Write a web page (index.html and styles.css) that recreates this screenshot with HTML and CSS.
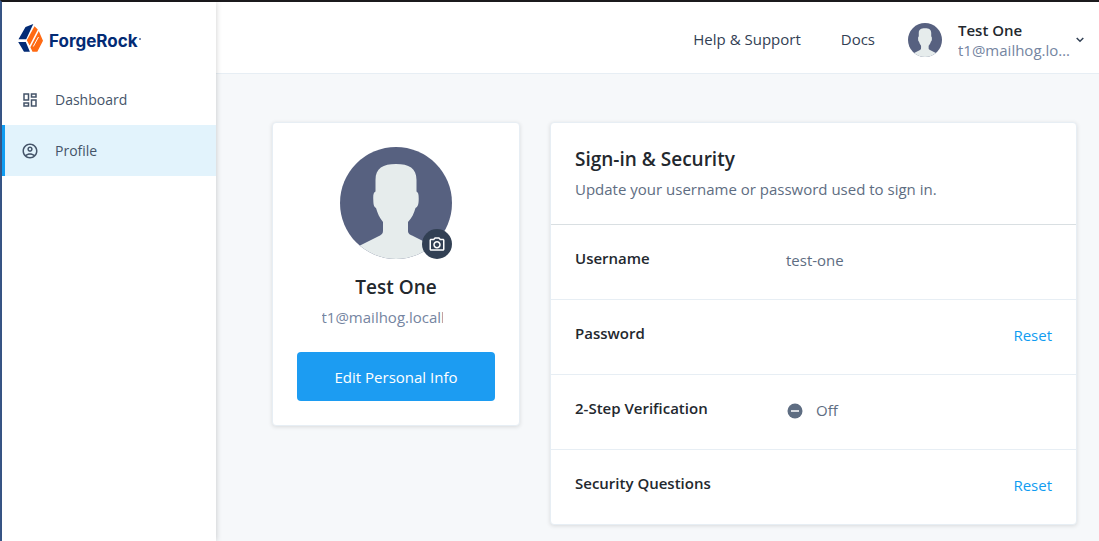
FILE: index.html
```html
<!DOCTYPE html>
<html lang="en">
<head>
<meta charset="utf-8">
<meta name="viewport" content="width=device-width, initial-scale=1">
<title>Profile</title>
<link rel="stylesheet" href="styles.css">
</head>
<body>
<svg class="sprite" aria-hidden="true">
  <symbol id="avatar" viewBox="0 0 112 112">
    <clipPath id="disc"><circle cx="56" cy="56" r="56"/></clipPath>
    <g clip-path="url(#disc)">
      <rect width="112" height="112" fill="#576180"/>
      <path fill="#e6ecec" d="M56 17C43 17 35.500 21 35.500 33V44.500C33.500 45.500 33 48 33.300 53C33.400 58 34 60 36 61C37.500 66 39.500 71 43 75V84C43 87 41 88 38 89.500L20 98.500V112H92V98.500L74 89.500C70 87.500 68 87 68 84V75C72 71 74 66 75.500 61C77.600 60 78.500 58 78.700 53C78.800 48 78.500 45.500 76.500 44.500V33C76.500 21 69 17 56 17Z"/>
    </g>
  </symbol>
</svg>
<div class="app">
  <aside class="sidebar">
    <a class="brand" href="#">
      <svg class="brand-mark" viewBox="0 0 25 28" aria-hidden="true">
        <path fill="#032b75" d="M0.500 15.300 7.500 3 15.300 0 8.200 15.300ZM0.200 18H7.800L11.900 27.800H6Z"/>
        <path fill="#ff6a13" d="M16.500 2.300 19.800 5.600 11.600 21.500 8.800 16.300ZM20.800 7 25 16.700 19.300 27.800H14.500L12.400 23.300Z"/>
        <path stroke="#fff" stroke-width="1" d="M20.500 13 15.300 22.500"/>
      </svg>
      <span>ForgeRock</span><span class="brand-dot"></span>
    </a>
    <nav class="menu">
      <a class="menu-item" href="#">
        <svg viewBox="0 0 24 24" aria-hidden="true"><path d="M19 5v2h-4V5h4M9 5v6H5V5h4m10 8v6h-4v-6h4M9 17v2H5v-2h4M21 3h-8v6h8V3zM11 3H3v10h8V3zm10 8h-8v10h8V11zm-10 4H3v6h8v-6z"/></svg>
        Dashboard
      </a>
      <a class="menu-item active" href="#" aria-current="page">
        <svg viewBox="0 0 24 24" aria-hidden="true"><path d="M12 2C6.480 2 2 6.480 2 12s4.480 10 10 10 10-4.480 10-10S17.520 2 12 2zM7.350 18.500C8.660 17.560 10.260 17 12 17s3.340.560 4.650 1.500C15.340 19.440 13.740 20 12 20s-3.340-.560-4.650-1.500zm10.790-1.380C16.450 15.800 14.320 15 12 15s-4.450.800-6.140 2.120C4.700 15.730 4 13.950 4 12c0-4.420 3.580-8 8-8s8 3.580 8 8c0 1.950-.700 3.730-1.860 5.120zM12 6c-1.930 0-3.500 1.570-3.500 3.500S10.070 13 12 13s3.500-1.570 3.500-3.500S13.930 6 12 6zm0 5c-.830 0-1.500-.670-1.500-1.500S11.170 8 12 8s1.500.670 1.500 1.500S12.830 11 12 11z"/></svg>
        Profile
      </a>
    </nav>
  </aside>
  <div class="page">
    <header class="topbar">
      <a class="top-link" href="#">Help &amp; Support</a>
      <a class="top-link" href="#">Docs</a>
      <button class="account" type="button">
        <svg class="account-avatar" aria-hidden="true"><use href="#avatar"/></svg>
        <span class="account-text">
          <span class="account-name">Test One</span>
          <span class="account-mail">t1@mailhog.localhost</span>
        </span>
        <svg class="chevron" viewBox="0 0 8 6" aria-hidden="true"><path d="M0.700 1 4 4.300 7.300 1"/></svg>
      </button>
    </header>
    <main class="content">
      <section class="card person">
        <div class="portrait">
          <svg class="portrait-image" aria-hidden="true"><use href="#avatar"/></svg>
          <button class="camera" type="button" aria-label="Change photo">
            <svg viewBox="0 0 24 24" aria-hidden="true"><path d="M20 5h-3.170L15 3H9L7.170 5H4c-1.100 0-2 .900-2 2v12c0 1.100.900 2 2 2h16c1.100 0 2-.900 2-2V7c0-1.100-.900-2-2-2zm0 14H4V7h4.050l1.830-2h4.240l1.830 2H20v12zM12 8c-2.760 0-5 2.240-5 5s2.240 5 5 5 5-2.240 5-5-2.240-5-5-5zm0 8c-1.650 0-3-1.350-3-3s1.350-3 3-3 3 1.350 3 3-1.350 3-3 3z"/></svg>
          </button>
        </div>
        <h2 class="heading">Test One</h2>
        <p class="person-mail">t1@mailhog.localhost</p>
        <button class="primary" type="button">Edit Personal Info</button>
      </section>
      <section class="card security">
        <div class="security-head">
          <h2 class="heading">Sign-in &amp; Security</h2>
          <p class="note">Update your username or password used to sign in.</p>
        </div>
        <div class="row">
          <h3 class="label">Username</h3>
          <span class="value">test-one</span>
        </div>
        <div class="row">
          <h3 class="label">Password</h3>
          <a class="action" href="#">Reset</a>
        </div>
        <div class="row">
          <h3 class="label">2-Step Verification</h3>
          <span class="value">
            <svg class="off-icon" viewBox="0 0 18 18" aria-hidden="true"><circle cx="9" cy="10" r="7.500" fill="#5e6d82"/><path d="M5 10h8" stroke="#fff" stroke-width="1.500"/></svg>
            Off
          </span>
        </div>
        <div class="row">
          <h3 class="label">Security Questions</h3>
          <a class="action" href="#">Reset</a>
        </div>
      </section>
    </main>
  </div>
</div>
</body>
</html>
```

FILE: styles.css
```css
* {
  box-sizing: border-box;
}

body {
  margin: 0;
  font: 15px/20px "Open Sans", "Noto Sans", sans-serif;
  color: #23282e;
}

h2, h3, p {
  margin: 0;
}

a {
  color: inherit;
  text-decoration: none;
}

button {
  padding: 0;
  border: 0;
  background: none;
  font: inherit;
  color: inherit;
  cursor: pointer;
}

svg {
  display: block;
  flex: none;
}

.sprite {
  position: absolute;
  width: 0;
  height: 0;
}

.app {
  display: flex;
  min-height: 100vh;
  border-top: 2px solid #1b1a1d;
  border-left: 2px solid #3b5b8f;
  background: #f6f8fa;
}

.sidebar {
  z-index: 1;
  flex: none;
  width: 214px;
  background: #fff;
  box-shadow: 0 0 6px rgba(0, 0, 0, 0.2);
}

.brand {
  display: flex;
  align-items: flex-start;
  height: 72px;
  padding: 22px 16px 0;
  font: 700 17px/34px Inter, sans-serif;
  color: #032b75;
}

.brand-mark {
  width: 25px;
  height: 28px;
  margin-right: 6px;
}

.brand-dot {
  width: 2px;
  height: 2px;
  margin: 14px 0 0 1px;
  background: #8091b5;
}

.menu-item {
  display: flex;
  align-items: center;
  gap: 16px;
  height: 51px;
  padding-left: 16px;
  border-left: 3px solid transparent;
  font-size: 14px;
  color: #455469;
}

.menu-item svg {
  width: 18px;
  height: 18px;
  fill: #455469;
}

.active {
  border-color: #109cf1;
  background: #e2f3fc;
}

.page {
  flex: 1;
  min-width: 0;
}

.topbar {
  display: flex;
  align-items: center;
  justify-content: flex-end;
  height: 72px;
  padding: 4px 15px 0 0;
  border-bottom: 1px solid #e7eef4;
  background: #fff;
}

.top-link {
  margin-right: 40px;
  padding-bottom: 2px;
  color: #324054;
}

.top-link + .top-link {
  margin-right: 33px;
}

.account {
  display: flex;
  align-items: center;
  text-align: left;
}

.account-avatar {
  width: 34px;
  height: 34px;
  margin-right: 16px;
}

.account-text {
  display: grid;
  width: 113px;
  margin-right: 5px;
}

.account-name {
  font-weight: 600;
}

.account-mail {
  overflow: hidden;
  text-overflow: ellipsis;
  white-space: nowrap;
  color: #7585a1;
}

.chevron {
  width: 8px;
  height: 6px;
  fill: none;
  stroke: #324054;
  stroke-width: 1.5;
}

.content {
  display: flex;
  align-items: flex-start;
  gap: 30px;
  padding: 48px 22px 16px 56px;
}

.card {
  border: 1px solid #e7eef4;
  border-radius: 4px;
  background: #fff;
  box-shadow: 0 1px 4px rgba(0, 0, 0, 0.12);
}

.heading {
  font-size: 19px;
  line-height: 24px;
  font-weight: 600;
}

.person {
  display: flex;
  flex-direction: column;
  align-items: center;
  flex: none;
  width: 248px;
  padding: 24px;
}

.portrait {
  position: relative;
  margin-bottom: 16px;
}

.portrait-image {
  width: 112px;
  height: 112px;
}

.camera {
  position: absolute;
  right: 0;
  bottom: 0;
  display: grid;
  place-items: center;
  width: 30px;
  height: 30px;
  border-radius: 50%;
  background: #324054;
}

.camera svg {
  width: 18px;
  height: 18px;
  fill: #fff;
}

.person-mail {
  width: 121px;
  margin: 8px 28px 25px 0;
  overflow: hidden;
  white-space: nowrap;
  color: #7585a1;
}

.primary {
  width: 100%;
  height: 49px;
  border-radius: 4px;
  background: #1c9cf2;
  font-weight: 500;
  color: #fff;
}

.security {
  flex: 1;
  min-width: 0;
}

.security-head {
  padding: 24px 24px 25px;
}

.note {
  margin-top: 8px;
  color: #5e6d82;
}

.row {
  display: flex;
  align-items: center;
  height: 75px;
  padding: 0 24px 4px;
  border-top: 1px solid #e7eef4;
}

.security-head + .row {
  border-top-color: #d9dfe2;
}

.label {
  flex: 0 0 211px;
  padding-bottom: 4px;
  font-size: 15px;
  font-weight: 600;
}

.value {
  display: flex;
  align-items: center;
  gap: 12px;
  color: #5e6d82;
}

.off-icon {
  width: 18px;
  height: 18px;
}

.action {
  margin-left: auto;
  font-weight: 500;
  color: #109cf1;
}
```
